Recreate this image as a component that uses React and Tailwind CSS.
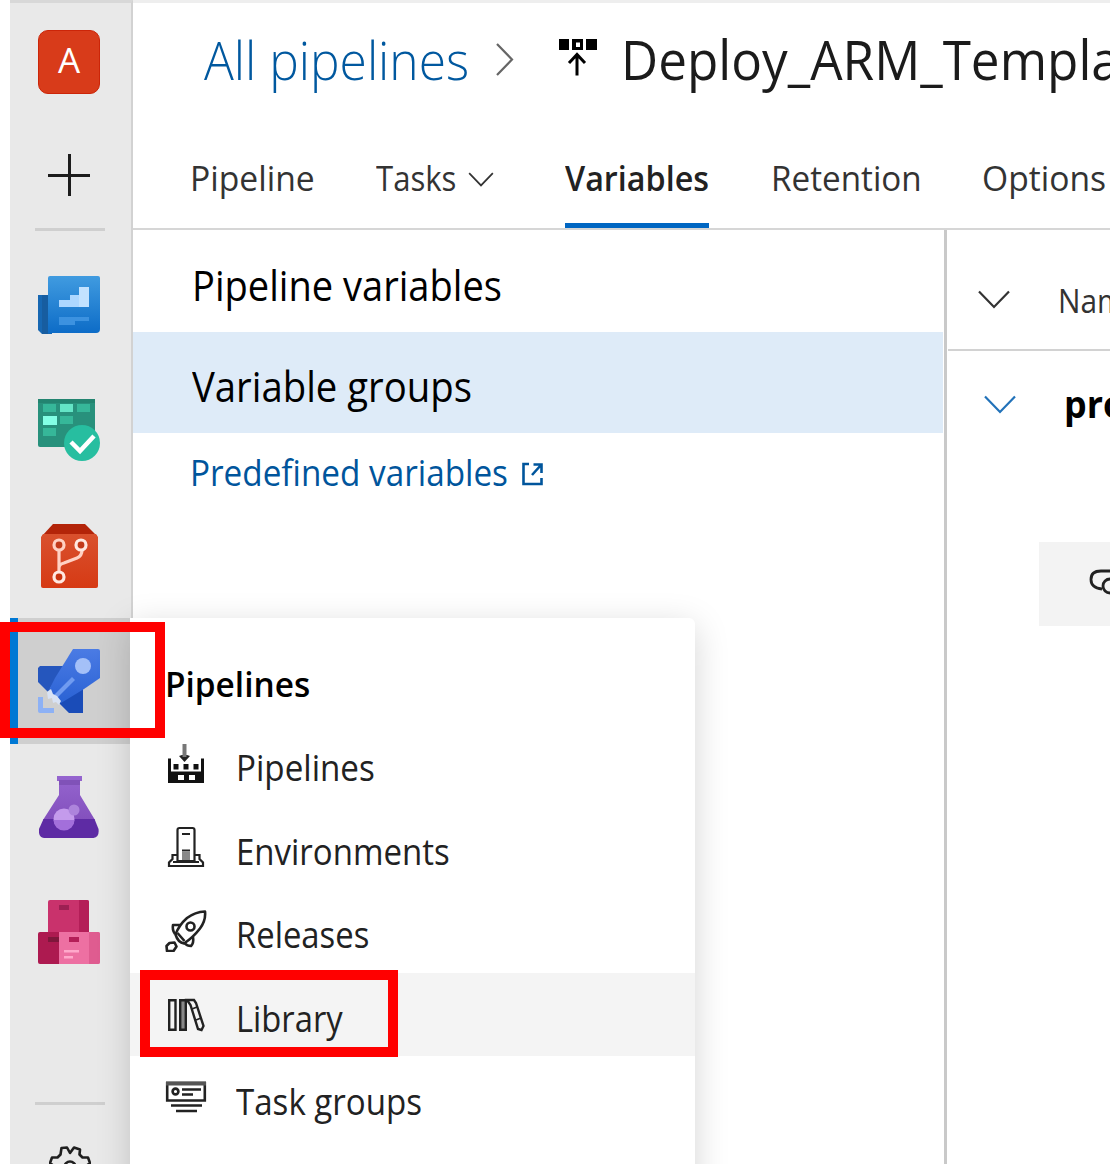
import { useLayoutEffect, useRef, useState } from 'react';

// Text condensed or widened to an exact advance width.
function Fit({ w, className = '', children }) {
  const ref = useRef(null);
  const [scale, setScale] = useState(1);
  useLayoutEffect(() => {
    setScale(w / ref.current.offsetWidth);
  }, [w]);
  return (
    <span className={'block shrink-0 whitespace-nowrap ' + className} style={{ width: w }}>
      <span ref={ref} className="inline-block origin-left" style={{ transform: `scaleX(${scale})` }}>
        {children}
      </span>
    </span>
  );
}

function Chevron({ className }) {
  return (
    <svg className={className} viewBox="0 0 32 19" fill="none" stroke="currentColor" strokeWidth="2.2">
      <path d="M1 1.5 16 17 31 1.5" />
    </svg>
  );
}

const BoardsOverview = () => (
  <svg className="h-[58px] w-[62px]" viewBox="0 0 62 58">
    <defs>
      <linearGradient id="ov" x1="0" y1="0" x2="0" y2="1">
        <stop stopColor="#409be0" />
        <stop offset="1" stopColor="#0d6cc7" />
      </linearGradient>
    </defs>
    <path d="M0 19h14v39H4l-4-4z" fill="#1767b2" />
    <path d="M4 19h6v39H4z" fill="#175da0" />
    <path d="M12 0h48q2 0 2 2v51q0 4-4 4H10V2q0-2 2-2z" fill="url(#ov)" />
    <path d="M21 24h11v-5h9v-8h10v20H21z" fill="#add7ff" />
    <path d="M41 11h10v20H41z" fill="#c2e2ff" />
    <path d="M21 41h30v4H37v4H21z" fill="#3c92e0" />
  </svg>
);

const Boards = () => (
  <svg className="h-[62px] w-[62px]" viewBox="0 0 62 62">
    <path d="M1 0h54q2 0 2 2v46H2q-2 0-2-2V1z" fill="#28917c" />
    <path d="M0 0h57v4H0z" fill="#238470" />
    <path d="M5 5h13v8H5zM39 5h13v8H39zM22 17h13v8H22zM5 29h13v8H5z" fill="#36b799" />
    <path d="M22 5h13v8H22z" fill="#64e5c6" />
    <path d="M5 17h14v9H5z" fill="#83ffe5" />
    <circle cx="44" cy="44" r="18" fill="#27bea0" />
    <path d="m33 43 9 9 14-15" fill="none" stroke="#fff" strokeWidth="4.5" />
  </svg>
);

const Repos = () => (
  <svg className="h-[64px] w-[57px]" viewBox="0 0 57 64">
    <defs>
      <linearGradient id="rp" x1="0" y1="0" x2="0" y2="1">
        <stop stopColor="#d9512e" />
        <stop offset="1" stopColor="#d63a14" />
      </linearGradient>
    </defs>
    <path d="M12 0h32l12 12H1z" fill="#b32409" />
    <path d="M2 10h53l2 3v49q0 2-2 2H2q-2 0-2-2V13z" fill="url(#rp)" />
    <g fill="none" stroke="#ffd1c3" strokeWidth="3.2">
      <path d="M18 26v21M18 44q0-4 5-5l13-5q5-2 5-8" />
      <circle cx="18" cy="21" r="5" fill="#c23a1a" />
      <circle cx="40" cy="21" r="5" stroke="#ffe8e0" fill="#c23a1a" />
      <circle cx="18" cy="53" r="5" stroke="#ffe8e0" fill="#c9330f" />
    </g>
  </svg>
);

const PipelinesLogo = () => (
  <svg className="h-[64px] w-[62px]" viewBox="0 0 62 64">
    <defs>
      <linearGradient id="pl" x1="0" y1="0" x2="0" y2="1">
        <stop stopColor="#4b7be4" />
        <stop offset="1" stopColor="#2a62d4" />
      </linearGradient>
    </defs>
    <path d="M2 17h24L10 43 0 33V19z" fill="#2556bd" />
    <path d="M23 52 45 38v26H31L20 53z" fill="#1a4cb8" />
    <path d="M35 0h25q2 0 2 2v27L46 40 23 54l-6-5-6-8 6-12z" fill="url(#pl)" />
    <path d="m15 47 19-19 3 3-19 19z" fill="#709bf0" />
    <circle cx="45" cy="17" r="8" fill="#a4c0f8" />
    <path d="M0 48h5v11h11v5H2q-2 0-2-2z" fill="#8db1f5" />
    <path d="m9 43 4-3 2 5 4 2 4 5-2 4-3-3-3 1-1-5-4 1z" fill="#d8e2f4" />
  </svg>
);

const TestPlans = () => (
  <svg className="h-[62px] w-[60px]" viewBox="0 0 60 62">
    <defs>
      <linearGradient id="tp" x1="0" y1="0" x2="0" y2="1">
        <stop stopColor="#9565cf" />
        <stop offset="1" stopColor="#8350bd" />
      </linearGradient>
    </defs>
    <path d="M18 0h25v5h-2v14l15 25H4l16-25V5h-2z" fill="url(#tp)" />
    <path d="M4.500 43h51l4 10q1 8-5 9H5q-6-1-5-9z" fill="#5e2ba4" />
    <path d="M20 4h21v5H20z" fill="#8052b8" />
    <circle cx="25" cy="43" r="10.500" fill="#c49bec" />
    <path d="M14.500 44h21a10.500 10.500 0 0 1-21 0z" fill="#a36fdb" />
    <circle cx="35" cy="34" r="5.500" fill="#ad84dc" />
  </svg>
);

const Artifacts = () => (
  <svg className="h-[64px] w-[62px]" viewBox="0 0 62 64">
    <path d="M12 0h37q2 0 2 2v30H10V2q0-2 2-2z" fill="#c9326c" />
    <path d="M41 0h8q2 0 2 2v30H41z" fill="#b41e58" />
    <path d="M21 5h10v5H21z" fill="#9d2053" />
    <path d="M2 32h19v32H2q-2 0-2-2V34q0-2 2-2z" fill="#ad1a50" />
    <path d="M10 37h11v5H10z" fill="#7e173b" />
    <path d="M21 32h39q2 0 2 2v28q0 2-2 2H21z" fill="#ed70a2" />
    <path d="M51 32h9q2 0 2 2v28q0 2-2 2h-9z" fill="#df5c90" />
    <path d="M31 37h10v5H31z" fill="#b41e58" />
    <path d="M26 50h15v2.500H26zM26 56h9v2.500H26z" fill="#ffa9cb" />
  </svg>
);

const Gear = () => (
  <svg className="h-[42px] w-[42px]" viewBox="0 0 42 42" fill="none" stroke="#1f1f1f" strokeWidth="2.6" strokeLinejoin="round">
    <path d="M12.500 2 18 1.500 21 7 25 1.500 31 3.500 30.500 8.500 33.500 11.500 39 11.500 41 17 36 21l5 4-2 5.500h-5.500l-3 3 .5 5-6 2-4-5.500-3 5.500-5.500-.5-.5-6.500-3-3H3l-2-5.500 5-4-5-4 2-5.500h5.500l3-3z" />
    <circle cx="21" cy="21" r="5.500" />
  </svg>
);

const BuildIcon = () => (
  <svg className="h-[42px] w-[42px]" viewBox="0 0 42 42">
    <path d="M17 12h5l3 1-5.500 6L14 13z" fill="#222" />
    <path d="M17.500 1h4v13h-4z" fill="#777" />
    <path d="M3 15.500h3v13h30v-13h3V40H3z" fill="#111" />
    <path d="M8.500 21h5v5.500h-5zM18.500 21h5v5.500h-5zM28.500 21h5v5.500h-5z" fill="#111" />
    <path d="M13 32h6v5h-6zM24 32h6v5h-6z" fill="#fff" />
  </svg>
);

const EnvIcon = () => (
  <svg className="h-[42px] w-[42px]" viewBox="0 0 42 42" fill="none" stroke="#222" strokeWidth="2.2">
    <path d="M12.500 35V4q0-2 2-2h13q2 0 2 2v31zM12 29H7.500v4L4 36.500V40h34v-3.500L34.500 33v-4H30" />
    <path d="M17 8h8M17 24.500h8M8 36h26" />
    <path d="M17 26h8v8h-8z" fill="#888" stroke="none" />
  </svg>
);

const RocketIcon = () => (
  <svg className="h-[42px] w-[42px]" viewBox="0 0 42 42" fill="none" stroke="#222" strokeWidth="2.600" strokeLinejoin="round">
    <path d="M40 1.500q1 9-5 17-7 9-16 15-6-1-8.500-9Q14 15 22 8q8-6 18-6.500z" />
    <circle cx="25.500" cy="16.500" r="4" />
    <path d="M15 15H8q-1 5 2 9M28 27q1 6-2 9-4 0-6-2.500M12.500 23l7 8" />
    <path d="m4.500 33 5-.5 2 4-3 4.500H2l-.5-5z" />
  </svg>
);

const LibraryIcon = () => (
  <svg className="h-[42px] w-[42px]" viewBox="0 0 42 42" fill="none" stroke="#222" strokeWidth="2.400">
    <path d="M4.200 6.200h6.300v29.600H4.200z" />
    <path d="M15.200 6.200h5.600v29.600h-5.600z" fill="#888" />
    <path d="M22 6h7l2 3 7.500 23-2 4-3.500-1-7.500-24z" />
    <path d="m27 15 5-2M31 26l5-2" strokeWidth="1.600" />
  </svg>
);

const TaskGroupIcon = () => (
  <svg className="h-[42px] w-[42px]" viewBox="0 0 42 42" fill="none" stroke="#222" strokeWidth="2.600">
    <path d="M2.200 6h37.600v17.500H2.200z" />
    <path d="M1 4.500h40v4H1z" fill="#555" stroke="none" />
    <circle cx="10.500" cy="14.500" r="2.900" />
    <path d="M17 12.500h19M17 17.500h11M6 28.500h31M11 34h21" />
  </svg>
);

const menu = [
  { label: 'Pipelines', w: 139, Icon: BuildIcon },
  { label: 'Environments', w: 214, Icon: EnvIcon },
  { label: 'Releases', w: 133, Icon: RocketIcon },
  { label: 'Library', w: 107, Icon: LibraryIcon, active: true },
  { label: 'Task groups', w: 186, Icon: TaskGroupIcon },
];

function Sidebar() {
  return (
    <nav className="ml-[10px] flex h-full w-[123px] shrink-0 flex-col border-r-2 border-t-[3px] border-r-[#d2d2d2] border-t-[#d8d8d8] bg-[#e9e9e9]">
      <div className="flex h-[117px] shrink-0 items-center pl-[28px]">
        <div className="flex h-[64px] w-[62px] items-center justify-center rounded-[10px] border border-[#cc2508] bg-[#d83b1a] pb-0.5 text-[35px] text-white">
          <Fit w={22}>A</Fit>
        </div>
      </div>
      <div className="flex h-[108px] shrink-0 items-center pl-[37px]">
        <svg className="h-[44px] w-[44px]" viewBox="0 0 44 44" stroke="#1c1c1c" strokeWidth="3">
          <path d="M1 23.500h42M22.500 2v43" />
        </svg>
      </div>
      <div className="ml-[25px] h-[3px] w-[70px] shrink-0 bg-[#cfcfcf]" />
      <div className="flex h-[126px] shrink-0 items-start pl-[28px] pt-[45px]"><BoardsOverview /></div>
      <div className="flex h-[126px] shrink-0 items-start pl-[28px] pt-[42px]"><Boards /></div>
      <div className="flex h-[135px] shrink-0 items-start pl-[31px] pt-[41px]"><Repos /></div>
      <div className="flex h-[126px] shrink-0 items-start border-l-[8px] border-[#0078d4] bg-[#cfcfcf] pl-[20px] pt-[31px]"><PipelinesLogo /></div>
      <div className="flex h-[125px] shrink-0 items-start pl-[29px] pt-[32px]"><TestPlans /></div>
      <div className="flex h-[233px] shrink-0 items-start pl-[28px] pt-[31px]"><Artifacts /></div>
      <div className="ml-[25px] h-[3px] w-[70px] shrink-0 bg-[#cfcfcf]" />
      <div className="flex shrink-0 pl-[39px] pt-[41px]"><Gear /></div>
    </nav>
  );
}

function Header() {
  return (
    <header className="shrink-0 border-b-2 border-t-[3px] border-b-[#d6d6d6] border-t-[#eeeeee]">
      <div className="flex h-[111px] items-center overflow-hidden pl-[71px] text-[54px] leading-[108px]">
        <Fit w={265} className="font-light text-[#00589f]">All pipelines</Fit>
        <svg className="ml-[26px] h-[34px] w-[20px] shrink-0" viewBox="0 0 20 34" fill="none" stroke="#666" strokeWidth="2.2">
          <path d="M2 2 17 17.500 2 33" />
        </svg>
        <svg className="mb-[4px] ml-[44px] h-[40px] w-[38px] shrink-0" viewBox="0 0 38 40">
          <path d="M0 2h10v11H0zM27 2h11v11H27zM13 2h11v11H13zm4 3.500v4.500h4V5.500z" fill="#000" fillRule="evenodd" />
          <path d="M18 38.500V18M10 26l8-8.500 8 8.500" fill="none" stroke="#000" strokeWidth="3" />
        </svg>
        <Fit w={499} className="ml-[24px] text-[#1b1b1b]">Deploy_ARM_Templa</Fit>
      </div>
      <div className="flex h-[114px] items-center overflow-hidden pl-[57px] text-[35px] text-[#333]">
        <Fit w={125} className="pt-[15px]">Pipeline</Fit>
        <Fit w={80} className="ml-[61px] pt-[15px]">Tasks</Fit>
        <Chevron className="ml-[12px] mt-[16px] h-[15px] w-[26px] shrink-0" />
        <div className="ml-[71px] flex h-full shrink-0 items-center border-b-[5px] border-[#0066c2] pt-[20px] font-semibold text-[#222]">
          <Fit w={144}>Variables</Fit>
        </div>
        <Fit w={151} className="ml-[62px] pt-[15px]">Retention</Fit>
        <Fit w={124} className="ml-[60px] pt-[15px]">Options</Fit>
      </div>
    </header>
  );
}

export default function App() {
  return (
    <div className="relative flex h-[1164px] w-[1110px] overflow-hidden bg-white font-['Open_Sans','Noto_Sans',sans-serif] text-black">
      <Sidebar />
      <main className="flex min-w-0 grow flex-col">
        <Header />
        <div className="flex min-h-0 grow">
          <section className="flex w-[814px] shrink-0 flex-col border-r-[3px] border-[#c9c9c9] text-[42px]">
            <div className="flex h-[102px] items-center pl-[59px] pt-[6px]">
              <Fit w={310}>Pipeline variables</Fit>
            </div>
            <div className="mr-px flex h-[101px] items-center bg-[#deebf8] pl-[59px] pt-[6px]">
              <Fit w={280}>Variable groups</Fit>
            </div>
            <div className="flex h-[78px] items-center pl-[57px] pt-[2px] text-[36px] text-[#00559c]">
              <Fit w={318}>Predefined variables</Fit>
              <svg className="ml-[13px] h-[25px] w-[24px]" viewBox="0 0 24 25" fill="none" stroke="currentColor" strokeWidth="2.600">
                <path d="M8 3H2.500v20h18v-6M11 14l9-10M12.500 3.500h8V12" />
              </svg>
            </div>
          </section>
          <section className="flex min-w-0 grow flex-col overflow-hidden">
            <div className="ml-px flex h-[121px] shrink-0 items-center border-b-[2px] border-[#d2d2d2] pl-[30px] pt-[20px] text-[32px] text-[#333]">
              <Chevron className="h-[19px] w-[32px] shrink-0" />
              <Fit w={83} className="ml-[48px] pt-[2px]">Name</Fit>
            </div>
            <div className="flex h-[103px] shrink-0 items-center pl-[37px] text-[37px] font-bold">
              <Chevron className="mt-[4px] h-[19px] w-[32px] shrink-0 text-[#2272b9]" />
              <Fit w={61} className="ml-[48px] pt-[2px]">pro</Fit>
            </div>
            <div className="ml-[92px] mt-[88px] h-[84px] bg-[#f3f3f3] pl-[50px] pt-[27px]">
              <svg className="h-[30px] w-[50px]" viewBox="0 0 50 30" fill="none" stroke="#222" strokeWidth="2.800">
                <path d="M40 2H12Q2 2 2 10.500 2 19 13 20" />
                <circle cx="21" cy="17" r="7" />
              </svg>
            </div>
          </section>
        </div>
      </main>

      {/* Flyout menu of the selected hub */}
      <div className="absolute left-[130px] top-[618px] h-[600px] w-[565px] rounded-tr-[6px] bg-white text-[#222] shadow-[0_8px_34px_rgba(0,0,0,0.17)]">
        <div className="flex h-[104px] items-center pl-[35px] pt-[29px] text-[35px] font-semibold text-black">
          <Fit w={145}>Pipelines</Fit>
        </div>
        {menu.map(({ label, w, Icon, active }) => (
          <div key={label} className={'flex h-[83.6px] items-center pl-[35px] text-[37px] ' + (active ? 'bg-[#f4f4f4]' : '')}>
            <Icon />
            <Fit w={w} className="ml-[29px] pt-[6px]">{label}</Fit>
          </div>
        ))}
      </div>

      {/* Highlight frames */}
      <div className="absolute left-0 top-[622px] h-[116px] w-[165px] border-[10px] border-[#ff0000]" />
      <div className="absolute left-[140px] top-[970px] h-[87px] w-[258px] border-[10px] border-[#ff0000]" />
    </div>
  );
}
